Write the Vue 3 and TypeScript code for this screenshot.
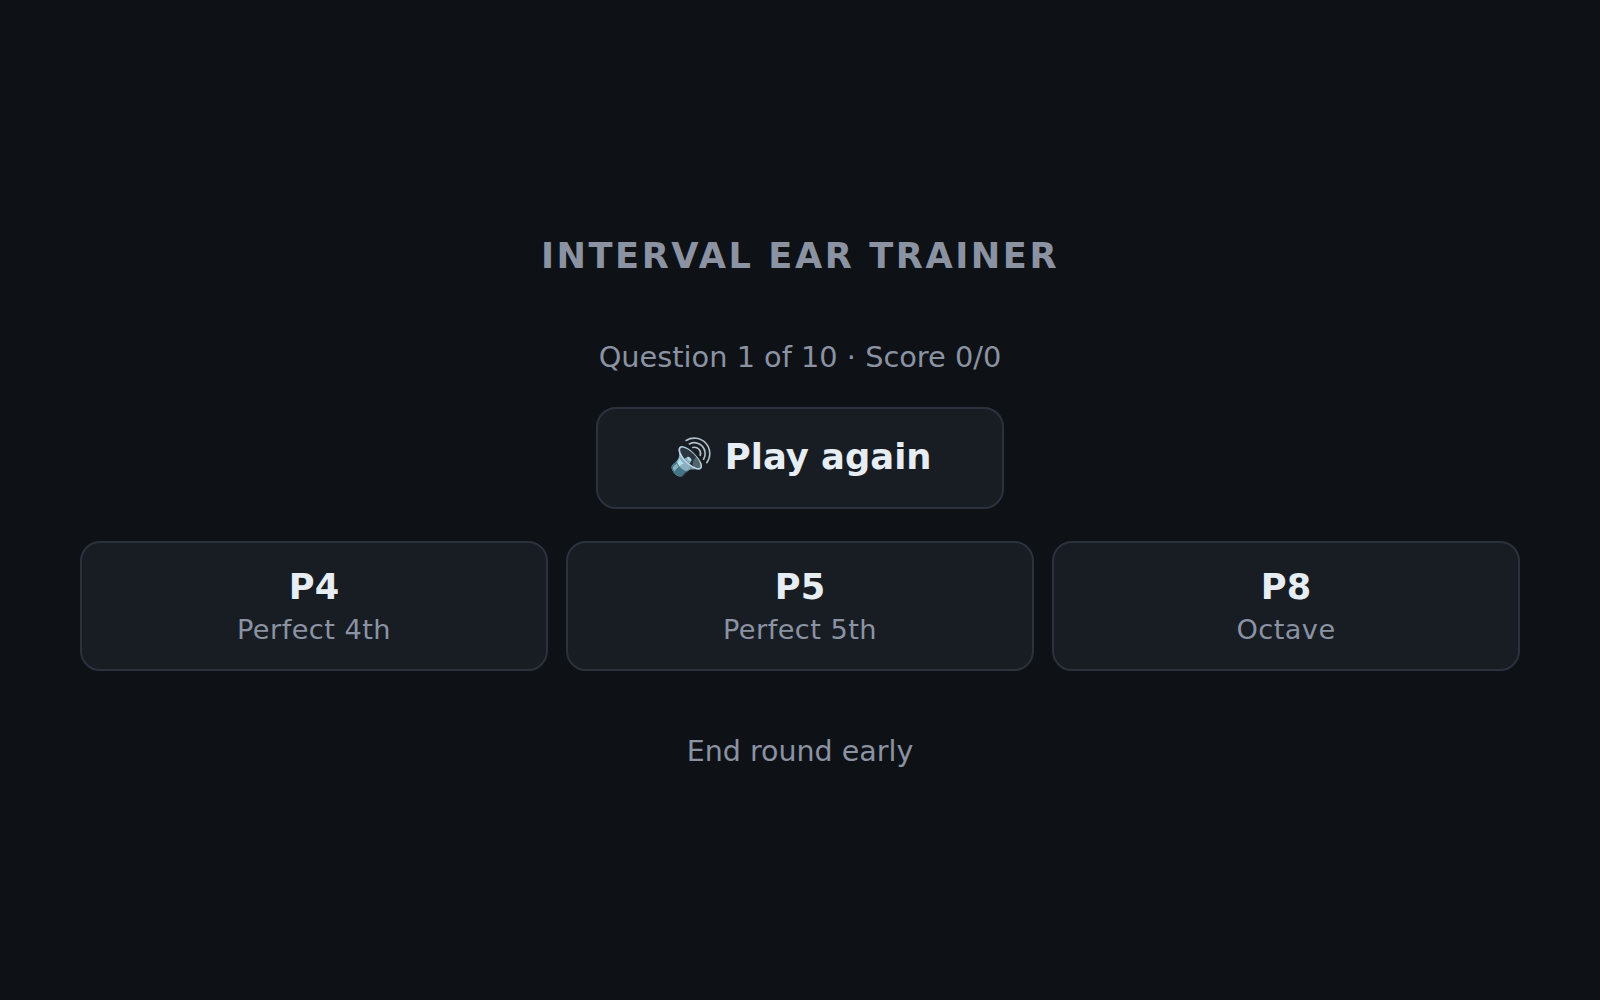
<script setup lang="ts">
const choices = [
  { short: 'P4', long: 'Perfect 4th' },
  { short: 'P5', long: 'Perfect 5th' },
  { short: 'P8', long: 'Octave' },
]
</script>

<template>
  <main class="page">
    <h1 class="title">INTERVAL EAR TRAINER</h1>
    <p class="status">Question 1 of 10 · Score 0/0</p>
    <button class="play">🔊 Play again</button>
    <div class="choices">
      <button v-for="c in choices" :key="c.short" class="choice">
        <span class="short">{{ c.short }}</span>
        <span class="long">{{ c.long }}</span>
      </button>
    </div>
    <button class="end">End round early</button>
  </main>
</template>

<style>
html, body { margin: 0; background: #0e1116; }
</style>

<style scoped>
.page {
  box-sizing: border-box;
  height: 1000px;
  padding: 14px 80px 0;
  display: flex;
  flex-direction: column;
  align-items: center;
  justify-content: center;
  background: #0e1116;
  font-family: "DejaVu Sans", sans-serif;
}
.title {
  margin: 0 0 64px;
  font-size: 35.2px;
  font-weight: 700;
  letter-spacing: 2.56px;
  color: #8b93a3;
}
.status {
  margin: 0 0 33px;
  font-size: 28.8px;
  color: #8b93a3;
}
button { font-family: inherit; }
.play {
  box-sizing: border-box;
  width: 408px;
  height: 102px;
  margin-bottom: 32px;
  padding: 0 0 2px;
  background: #181d24;
  border: 2px solid #2c323d;
  border-radius: 20px;
  color: #e6edf3;
  font-size: 35.4px;
  font-weight: 700;
}
.choices {
  width: 100%;
  display: grid;
  grid-template-columns: repeat(3, 1fr);
  gap: 18px;
}
.choice {
  box-sizing: border-box;
  height: 130px;
  display: flex;
  flex-direction: column;
  align-items: center;
  justify-content: center;
  gap: 7px;
  background: #181d24;
  border: 2px solid #2c323d;
  border-radius: 20px;
}
.short {
  font-size: 35.2px;
  font-weight: 700;
  color: #e6edf3;
}
.long {
  font-size: 27.2px;
  letter-spacing: 0.45px;
  color: #8b93a3;
}
.end {
  margin-top: 52px;
  padding: 12px 24px;
  background: transparent;
  border: none;
  color: #8b93a3;
  font-size: 28.5px;
}
</style>
